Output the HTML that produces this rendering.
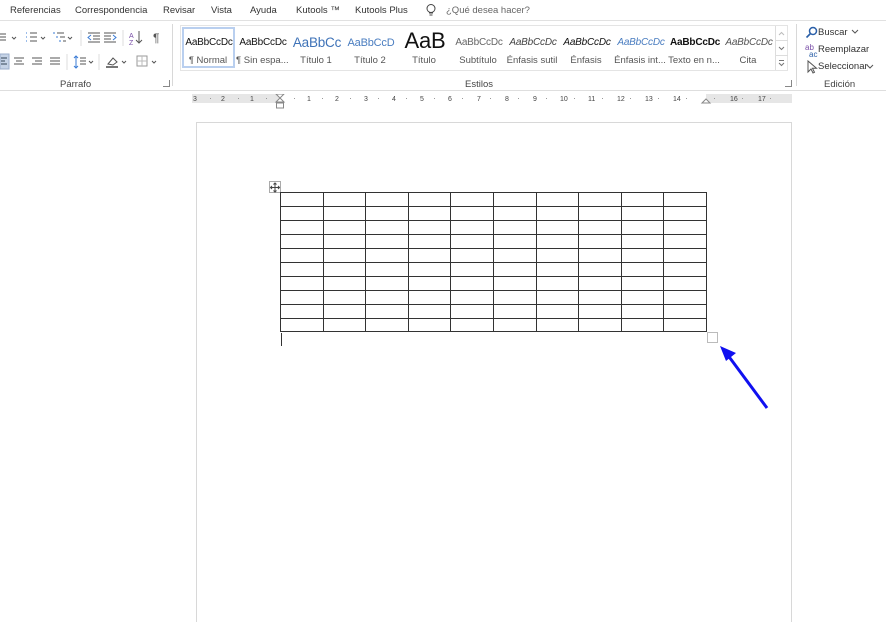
<!DOCTYPE html>
<html><head><meta charset="utf-8">
<style>
*{margin:0;padding:0;box-sizing:border-box}
body{width:886px;height:612px;background:#fff;font-family:"Liberation Sans",sans-serif;position:relative;overflow:hidden;color:#333}
.a{position:absolute;white-space:nowrap}
.tab{font-size:9.5px;top:5px;color:#333}
.sty{position:absolute;top:30px;width:52px;height:38px;text-align:center;overflow:hidden}
.sty .p{font-size:10px;height:22px;line-height:26px;overflow:hidden;white-space:nowrap;letter-spacing:-0.2px;width:50px;margin-left:2px}
.sty .n{font-size:9.5px;color:#555;margin-top:3px;white-space:nowrap;overflow:hidden}
.rl{position:absolute;top:96px;font-size:7px;color:#444}
</style></head><body>
<div class="a tab" style="left:10px">Referencias</div>
<div class="a tab" style="left:75px">Correspondencia</div>
<div class="a tab" style="left:163px">Revisar</div>
<div class="a tab" style="left:211px">Vista</div>
<div class="a tab" style="left:250px">Ayuda</div>
<div class="a tab" style="left:296px">Kutools ™</div>
<div class="a tab" style="left:355px">Kutools Plus</div>
<svg class="a" style="left:425px;top:3px" width="12" height="14"><circle cx="6" cy="5.5" r="4" fill="none" stroke="#444"/><path d="M4 10h4M4.5 12h3" stroke="#444"/></svg>
<div class="a tab" style="left:446px;color:#666">¿Qué desea hacer?</div>
<div class="a" style="left:0;top:20px;width:886px;height:1px;background:#e1e1e1"></div>

<svg class="a" style="left:0;top:28px" width="175" height="45" stroke="#555" fill="none" stroke-width="1">
<path d="M0 6h6M0 9h6M0 12h6"/><path d="M12 9l2 2 2-2"/>
<path d="M26 5h1M26 9h1M26 13h1" stroke="#3a7bd5"/><path d="M30 5h7M30 9h7M30 13h7"/><path d="M41 9l2 2 2-2"/>
<path d="M53 5h2M56 9h2M59 13h2" stroke="#3a7bd5"/><path d="M57 5h7M60 9h5M63 13h3"/><path d="M68 9l2 2 2-2"/>
<path d="M81 2v16" stroke="#ddd"/>
<path d="M88 5h12M93 8h7M93 11h7M88 14h12"/><path d="M91 7l-3 2.5 3 2.5" stroke="#3a7bd5"/>
<path d="M104 5h12M104 8h7M104 11h7M104 14h12"/><path d="M113 7l3 2.5-3 2.5" stroke="#3a7bd5"/>
<path d="M123 2v16" stroke="#ddd"/>
<text x="129" y="10" font-size="7" fill="#7a4fa8" stroke="none">A</text><text x="129" y="17" font-size="7" fill="#7a4fa8" stroke="none">Z</text><path d="M139 3v12M136 12l3 3 3-3"/>
<text x="153" y="14" font-size="12" fill="#555" stroke="none">¶</text>
<rect x="0" y="26" width="9" height="15" fill="#c5d3e6" stroke="#9aaecb"/><path d="M1 30h6M1 33h4M1 36h6" stroke="#345"/>
<path d="M14 30h10M16 33h6M14 36h10M32 30h10M35 33h7M32 36h10M50 30h10M50 33h10M50 36h10"/>
<path d="M67 26v16" stroke="#ddd"/>
<path d="M76 28v12M74 30l2-2 2 2M74 38l2 2 2-2" stroke="#3a7bd5"/><path d="M80 30h6M80 33h6M80 36h6"/><path d="M89 33l2 2 2-2"/>
<path d="M99 26v16" stroke="#ddd"/>
<path d="M108 36l5-6 4 4-4 3z"/><path d="M106 39h12" stroke="#777" stroke-width="2"/><path d="M122 33l2 2 2-2"/>
<rect x="137" y="28" width="10" height="10" stroke="#999"/><path d="M142 28v10M137 33h10" stroke="#bbb"/><path d="M152 33l2 2 2-2"/>
</svg>
<div class="a" style="left:60px;top:79px;font-size:9.5px;color:#444">Párrafo</div>
<div class="a" style="left:163px;top:80px;width:7px;height:7px;border:1px solid #888;border-top:none;border-left:none"></div>
<div class="a" style="left:172px;top:24px;width:1px;height:62px;background:#d8d8d8"></div>

<div class="a" style="left:180px;top:25px;width:608px;height:46px;border:1px solid #e4e4e4"></div>
<div class="a" style="left:182px;top:27px;width:53px;height:41px;border:2px solid #b9cfef"></div>
<div class="sty" style="left:182px"><div class="p" style="color:#111">AaBbCcDc</div><div class="n">¶ Normal</div></div>
<div class="sty" style="left:236px"><div class="p" style="color:#111">AaBbCcDc</div><div class="n">¶ Sin espa...</div></div>
<div class="sty" style="left:290px"><div class="p" style="color:#3f73b8;font-size:13.5px">AaBbCc</div><div class="n">Título 1</div></div>
<div class="sty" style="left:344px"><div class="p" style="color:#4a7dc0;font-size:11px">AaBbCcD</div><div class="n">Título 2</div></div>
<div class="sty" style="left:398px"><div class="p" style="color:#111;font-size:22px;line-height:22px">AaB</div><div class="n">Título</div></div>
<div class="sty" style="left:452px"><div class="p" style="color:#666">AaBbCcDc</div><div class="n">Subtítulo</div></div>
<div class="sty" style="left:506px"><div class="p" style="color:#444;font-style:italic">AaBbCcDc</div><div class="n">Énfasis sutil</div></div>
<div class="sty" style="left:560px"><div class="p" style="color:#111;font-style:italic">AaBbCcDc</div><div class="n">Énfasis</div></div>
<div class="sty" style="left:614px"><div class="p" style="color:#4a7dc0;font-style:italic">AaBbCcDc</div><div class="n">Énfasis int...</div></div>
<div class="sty" style="left:668px"><div class="p" style="color:#111;font-weight:bold">AaBbCcDc</div><div class="n">Texto en n...</div></div>
<div class="sty" style="left:722px"><div class="p" style="color:#555;font-style:italic">AaBbCcDc</div><div class="n">Cita</div></div>
<div class="a" style="left:775px;top:26px;width:12px;height:44px;border-left:1px solid #ddd;background:#fff"></div>
<svg class="a" style="left:775px;top:26px" width="13" height="44" stroke="#777" fill="none"><path d="M0 14.5h13M0 29.5h13" stroke="#ddd"/><path d="M4 9l2.5-2.5 2.5 2.5" stroke="#bbb"/><path d="M4 21l2.5 2.5 2.5-2.5"/><path d="M4 34.5h5M4 37l2.5 2.5 2.5-2.5"/></svg>
<div class="a" style="left:465px;top:79px;font-size:9.5px;color:#444">Estilos</div>
<div class="a" style="left:785px;top:80px;width:7px;height:7px;border:1px solid #888;border-top:none;border-left:none"></div>
<div class="a" style="left:796px;top:24px;width:1px;height:62px;background:#d8d8d8"></div>

<svg class="a" style="left:804px;top:25px" width="16" height="50" fill="none">
<circle cx="9" cy="6" r="3.5" stroke="#2a5fa8" stroke-width="1.5"/><path d="M6.5 8.5l-4 4" stroke="#2a5fa8" stroke-width="1.6"/>
<text x="1" y="25" font-size="8" fill="#7a4fa8">ab</text><text x="5" y="32" font-size="8" fill="#2a5fa8">ac</text>
<path d="M4 36v11l3-3 2 4 1.5-.7-2-4h4z" stroke="#555"/>
</svg>
<div class="a" style="left:818px;top:27px;font-size:9.5px;color:#333">Buscar</div>
<svg class="a" style="left:851px;top:29px" width="8" height="6"><path d="M1 1l3 3 3-3" stroke="#555" fill="none"/></svg>
<div class="a" style="left:818px;top:44px;font-size:9.5px;color:#333">Reemplazar</div>
<div class="a" style="left:818px;top:61px;font-size:9.5px;color:#333">Seleccionar</div>
<svg class="a" style="left:866px;top:64px" width="8" height="6"><path d="M1 1l3 3 3-3" stroke="#555" fill="none"/></svg>
<div class="a" style="left:824px;top:79px;font-size:9.5px;color:#444">Edición</div>

<div class="a" style="left:0;top:90px;width:886px;height:1px;background:#dedede"></div>

<div class="a" style="left:192px;top:94px;width:600px;height:9px;background:#e6e6e6"></div>
<div class="a" style="left:280px;top:94px;width:426px;height:9px;background:#fff"></div>
<div class="rl" style="left:193px">3</div><div class="rl" style="left:221px">2</div><div class="rl" style="left:250px">1</div>
<div class="rl" style="left:307px">1</div><div class="rl" style="left:335px">2</div><div class="rl" style="left:364px">3</div><div class="rl" style="left:392px">4</div><div class="rl" style="left:420px">5</div><div class="rl" style="left:448px">6</div><div class="rl" style="left:477px">7</div><div class="rl" style="left:505px">8</div><div class="rl" style="left:533px">9</div><div class="rl" style="left:560px">10</div><div class="rl" style="left:588px">11</div><div class="rl" style="left:617px">12</div><div class="rl" style="left:645px">13</div><div class="rl" style="left:673px">14</div><div class="rl" style="left:730px">16</div><div class="rl" style="left:758px">17</div>
<svg class="a" style="left:190px;top:94px" width="604" height="16" fill="none" stroke="#999">
<path d="M20 4.5h1M48 4.5h1M76 4.5h1M104 4.5h1M132 4.5h1M160 4.5h1M188 4.5h1M216 4.5h1M244 4.5h1M272 4.5h1M300 4.5h1M328 4.5h1M356 4.5h1M384 4.5h1M412 4.5h1M440 4.5h1M468 4.5h1M496 4.5h1M524 4.5h1M552 4.5h1M580 4.5h1"/>
<path d="M86 0h8l-4 4 4 4h-8l4-4z" stroke="#888" fill="#fff"/><rect x="86.5" y="9" width="7" height="5" fill="#fff" stroke="#888"/>
<path d="M512 9l4-4 4 4z" fill="#fff" stroke="#888"/>
</svg>

<div class="a" style="left:196px;top:122px;width:596px;height:500px;border:1px solid #d8d8d8;border-bottom:none"></div>

<svg class="a" style="left:266px;top:180px" width="460" height="170" fill="none">
<rect x="3.5" y="1.5" width="11" height="11" stroke="#aaa" fill="#fff"/>
<path d="M9 3v9M4.5 7.5h9" stroke="#444"/><path d="M7.5 4.5L9 3l1.5 1.5M7.5 10.5L9 12l1.5-1.5M6 6l-1.5 1.5L6 9M12 6l1.5 1.5L12 9" stroke="#444"/>
<g stroke="#333" stroke-width="1">
<path d="M14.5 12.5h426M14.5 26.5h426M14.5 40.5h426M14.5 54.5h426M14.5 68.5h426M14.5 82.5h426M14.5 96.5h426M14.5 110.5h426M14.5 124.5h426M14.5 138.5h426M14.5 151.5h426"/>
<path d="M14.5 12v140M57.5 12v140M99.5 12v140M142.5 12v140M184.5 12v140M227.5 12v140M270.5 12v140M312.5 12v140M355.5 12v140M397.5 12v140M440.5 12v140"/>
</g>
<path d="M15.5 153v13" stroke="#333"/>
<rect x="441.5" y="152.5" width="10" height="10" stroke="#bbb" fill="#fff"/>
</svg>

<svg class="a" style="left:715px;top:340px" width="60" height="75">
<path d="M52 68L12 14" stroke="#1010f0" stroke-width="3"/>
<path d="M5 6L21 13 11 21z" fill="#1010f0"/>
</svg>
</body></html>
